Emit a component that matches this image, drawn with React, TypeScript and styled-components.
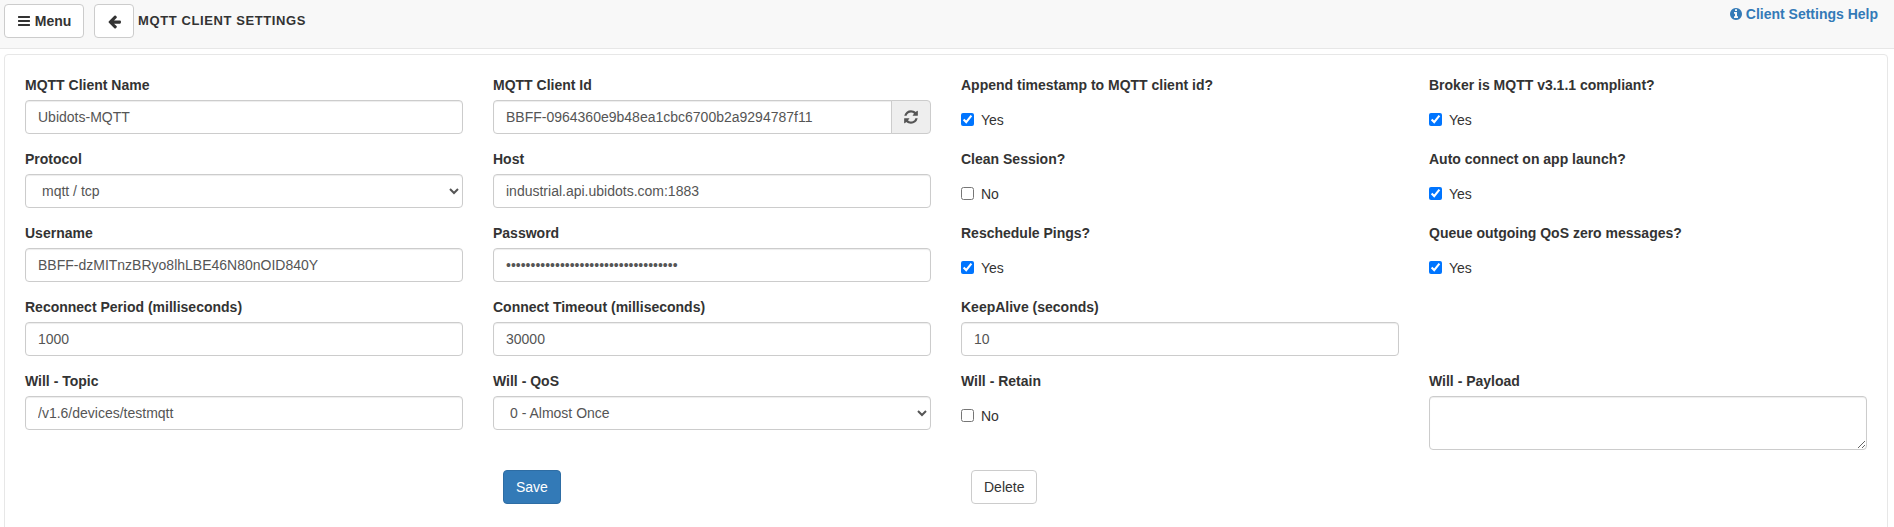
import { FunctionComponent, ReactNode } from 'react';
import styled, { createGlobalStyle } from 'styled-components';

const ICONS = {
  bars: 'M1664 1344v128q0 26-19 45t-45 19h-1408q-26 0-45-19t-19-45v-128q0-26 19-45t45-19h1408q26 0 45 19t19 45zm0-512v128q0 26-19 45t-45 19h-1408q-26 0-45-19t-19-45v-128q0-26 19-45t45-19h1408q26 0 45 19t19 45zm0-512v128q0 26-19 45t-45 19h-1408q-26 0-45-19t-19-45v-128q0-26 19-45t45-19h1408q26 0 45 19t19 45z',
  back: 'M1664 896v128q0 53-32.5 90.5t-84.5 37.5h-704l293 294q38 36 38 90t-38 90l-75 76q-37 37-90 37-52 0-91-37l-651-652q-37-37-37-90 0-52 37-91l651-650q38-38 91-38 52 0 90 38l75 74q38 38 38 91t-38 91l-293 293h704q52 0 84.5 37.5t32.5 90.5z',
  refresh: 'M1639 1056q0 5-1 7-64 268-268 434.5t-478 166.5q-146 0-282.5-55t-243.5-157l-129 129q-19 19-45 19t-45-19-19-45v-448q0-26 19-45t45-19h448q26 0 45 19t19 45-19 45l-137 137q71 66 161 102t187 36q134 0 250-65t186-179q11-17 53-117 8-23 30-23h192q13 0 22.5 9.5t9.5 22.5zm25-800v448q0 26-19 45t-45 19h-448q-26 0-45-19t-19-45 19-45l138-138q-148-137-349-137-134 0-250 65t-186 179q-11 17-53 117-8 23-30 23h-199q-13 0-22.5-9.5t-9.5-22.5v-7q65-268 270-434.5t480-166.5q146 0 284 55.5t245 156.5l130-129q19-19 45-19t45 19 19 45z',
  info: 'M1152 1376v-160q0-14-9-23t-23-9h-96v-512q0-14-9-23t-23-9h-320q-14 0-23 9t-9 23v160q0 14 9 23t23 9h96v320h-96q-14 0-23 9t-9 23v160q0 14 9 23t23 9h448q14 0 23-9t9-23zm-128-896v-160q0-14-9-23t-23-9h-192q-14 0-23 9t-9 23v160q0 14 9 23t23 9h192q14 0 23-9t9-23zm640 416q0 209-103 385.5t-279.5 279.5-385.5 103-385.5-103-279.5-279.5-103-385.5 103-385.5 279.5-279.5 385.5-103 385.5 103 279.5 279.5 103 385.5z',
};

const Icon: FunctionComponent<{ name: keyof typeof ICONS; size?: number }> = ({ name, size = 14 }) => (
  <svg width={size} height={size} viewBox="0 0 1792 1792" fill="currentColor">
    <path d={ICONS[name]} />
  </svg>
);

const GlobalStyle = createGlobalStyle`
  * {
    box-sizing: border-box;
  }

  body {
    margin: 0;
    background: #fff;
    color: #333;
    font-family: 'Liberation Sans', Arial, sans-serif;
    font-size: 14px;
    line-height: 20px;
  }
`;

const Page = styled.div`
  width: 1894px;
  height: 527px;
  overflow: hidden;
`;

const TopBar = styled.header`
  display: flex;
  align-items: flex-start;
  height: 49px;
  padding: 4px 4px 0;
  background: #f8f8f8;
  border-bottom: 1px solid #e7e7e7;
`;

const BarButton = styled.button<{ $width: number }>`
  display: flex;
  align-items: center;
  justify-content: center;
  gap: 4px;
  width: ${(props) => props.$width}px;
  height: 34px;
  padding: 0;
  margin-right: 10px;
  background: #fff;
  border: 1px solid #ccc;
  border-radius: 4px;
  color: #333;
  font: bold 14px 'Liberation Sans', Arial, sans-serif;
`;

const PageTitle = styled.h1`
  flex: 1;
  margin: 8px 0 0 -6px;
  font-size: 13px;
  font-weight: bold;
  line-height: 17px;
  letter-spacing: 0.6px;
  color: #333;
`;

const HelpLink = styled.a`
  display: flex;
  align-items: center;
  gap: 3px;
  margin: 0 12px 0 0;
  color: #337ab7;
  font-size: 14px;
  font-weight: bold;
  line-height: 20px;
`;

const Panel = styled.main`
  margin: 5px 6px 0 4px;
  padding: 20px 20px 0;
  min-height: 480px;
  background: #fff;
  border: 1px solid #e7e7e7;
  border-radius: 4px;
`;

const FormGrid = styled.form`
  display: grid;
  grid-template-columns: repeat(4, 438px);
  column-gap: 30px;
`;

const Field = styled.div`
  margin-bottom: 15px;
  min-height: 59px;
`;

const Label = styled.label`
  display: block;
  margin-bottom: 5px;
  font-weight: bold;
`;

const controlStyles = `
  display: block;
  width: 100%;
  height: 34px;
  padding: 6px 12px;
  background: #fff;
  border: 1px solid #ccc;
  border-radius: 4px;
  box-shadow: inset 0 1px 1px rgba(0, 0, 0, 0.075);
  color: #555;
  font-family: 'Liberation Sans', Arial, sans-serif;
  font-size: 14px;
  line-height: 20px;
`;

const TextInput = styled.input`
  ${controlStyles}
`;

const SelectInput = styled.select`
  ${controlStyles}
`;

const TextArea = styled.textarea`
  ${controlStyles}
  height: 54px;
`;

const InputGroup = styled.div`
  display: flex;
`;

const GroupInput = styled(TextInput)`
  flex: 1;
  min-width: 0;
  border-radius: 4px 0 0 4px;
`;

const GroupAddon = styled.span`
  display: flex;
  align-items: center;
  justify-content: center;
  width: 40px;
  height: 34px;
  margin-left: -1px;
  background: #eee;
  border: 1px solid #ccc;
  border-radius: 0 4px 4px 0;
  color: #555;
`;

const CheckRow = styled.label`
  display: flex;
  align-items: center;
  gap: 7px;
  height: 34px;
  padding-top: 5px;
`;

const CheckBox = styled.input`
  width: 13px;
  height: 13px;
  margin: 0;
`;

const ActionCell = styled.div`
  padding-left: 10px;
  margin-top: 5px;
`;

const ActionButton = styled.button<{ $primary?: boolean }>`
  height: 34px;
  padding: 6px 12px;
  background: ${(props) => (props.$primary ? '#337ab7' : '#fff')};
  border: 1px solid ${(props) => (props.$primary ? '#2e6da4' : '#ccc')};
  border-radius: 4px;
  color: ${(props) => (props.$primary ? '#fff' : '#333')};
  font: 14px/20px 'Liberation Sans', Arial, sans-serif;
`;

const TextField: FunctionComponent<{ label: string; value: string; type?: string }> = ({
  label,
  value,
  type = 'text',
}) => (
  <Field>
    <Label>{label}</Label>
    <TextInput type={type} defaultValue={value} />
  </Field>
);

const SelectField: FunctionComponent<{ label: string; option: string }> = ({ label, option }) => (
  <Field>
    <Label>{label}</Label>
    <SelectInput>
      <option>{option}</option>
    </SelectInput>
  </Field>
);

const CheckField: FunctionComponent<{ label: string; checked?: boolean }> = ({ label, checked }) => (
  <Field>
    <Label as="div">{label}</Label>
    <CheckRow>
      <CheckBox type="checkbox" defaultChecked={checked} />
      {checked ? 'Yes' : 'No'}
    </CheckRow>
  </Field>
);

const Blank: FunctionComponent<{ children?: ReactNode }> = ({ children }) => <div>{children}</div>;

export default function App() {
  return (
    <Page>
      <GlobalStyle />
      <TopBar>
        <BarButton $width={80}>
          <Icon name="bars" />
          Menu
        </BarButton>
        <BarButton $width={40}>
          <Icon name="back" size={15} />
        </BarButton>
        <PageTitle>MQTT CLIENT SETTINGS</PageTitle>
        <HelpLink>
          <Icon name="info" />
          Client Settings Help
        </HelpLink>
      </TopBar>
      <Panel>
        <FormGrid>
          <TextField label="MQTT Client Name" value="Ubidots-MQTT" />
          <Field>
            <Label>MQTT Client Id</Label>
            <InputGroup>
              <GroupInput defaultValue="BBFF-0964360e9b48ea1cbc6700b2a9294787f11" />
              <GroupAddon>
                <Icon name="refresh" size={16} />
              </GroupAddon>
            </InputGroup>
          </Field>
          <CheckField label="Append timestamp to MQTT client id?" checked />
          <CheckField label="Broker is MQTT v3.1.1 compliant?" checked />

          <SelectField label="Protocol" option="mqtt / tcp" />
          <TextField label="Host" value="industrial.api.ubidots.com:1883" />
          <CheckField label="Clean Session?" />
          <CheckField label="Auto connect on app launch?" checked />

          <TextField label="Username" value="BBFF-dzMITnzBRyo8lhLBE46N80nOID840Y" />
          <TextField label="Password" type="password" value="BBFF-dzMITnzBRyo8lhLBE46N80nOID840Y" />
          <CheckField label="Reschedule Pings?" checked />
          <CheckField label="Queue outgoing QoS zero messages?" checked />

          <TextField label="Reconnect Period (milliseconds)" value="1000" />
          <TextField label="Connect Timeout (milliseconds)" value="30000" />
          <TextField label="KeepAlive (seconds)" value="10" />
          <Blank />

          <TextField label="Will - Topic" value="/v1.6/devices/testmqtt" />
          <SelectField label="Will - QoS" option="0 - Almost Once" />
          <CheckField label="Will - Retain" />
          <Field>
            <Label>Will - Payload</Label>
            <TextArea />
          </Field>

          <Blank />
          <ActionCell>
            <ActionButton type="button" $primary>
              Save
            </ActionButton>
          </ActionCell>
          <ActionCell>
            <ActionButton type="button">Delete</ActionButton>
          </ActionCell>
          <Blank />
        </FormGrid>
      </Panel>
    </Page>
  );
}
